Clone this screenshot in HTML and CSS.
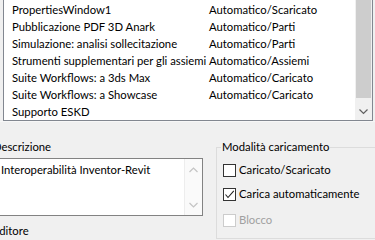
FILE: index.html
```html
<!DOCTYPE html>
<html>
<head>
<meta charset="utf-8">
<link rel="stylesheet" href="styles.css">
</head>
<body>
<div class="list">
  <div class="rows">
    <div class="row"><span class="c1">PropertiesWindow1</span><span class="c2">Automatico/Scaricato</span></div>
    <div class="row"><span class="c1">Pubblicazione PDF 3D Anark</span><span class="c2">Automatico/Parti</span></div>
    <div class="row"><span class="c1">Simulazione: analisi sollecitazione</span><span class="c2">Automatico/Parti</span></div>
    <div class="row"><span class="c1">Strumenti supplementari per gli assiemi</span><span class="c2">Automatico/Assiemi</span></div>
    <div class="row"><span class="c1">Suite Workflows: a 3ds Max</span><span class="c2">Automatico/Caricato</span></div>
    <div class="row"><span class="c1">Suite Workflows: a Showcase</span><span class="c2">Automatico/Caricato</span></div>
    <div class="row"><span class="c1">Supporto ESKD</span><span class="c2"></span></div>
  </div>
  <div class="vscroll">
    <div class="thumb"></div>
    <div class="arrow">
      <svg width="9" height="6" viewBox="0 0 9 6"><polyline points="0.5,0.5 4.5,4.5 8.5,0.5" fill="none" stroke="#606060" stroke-width="1.2"/></svg>
    </div>
  </div>
</div>
<div class="bottom">
  <div class="left">
    <div class="label">Descrizione</div>
    <div class="textbox">
      <div class="tbtext">Interoperabilità Inventor-Revit</div>
      <div class="tbscroll">
        <svg width="9" height="6" viewBox="0 0 9 6"><polyline points="0.5,5 4.5,1 8.5,5" fill="none" stroke="#c4c4c4" stroke-width="1.2"/></svg>
        <svg width="9" height="6" viewBox="0 0 9 6"><polyline points="0.5,1 4.5,5 8.5,1" fill="none" stroke="#c4c4c4" stroke-width="1.2"/></svg>
      </div>
    </div>
    <div class="label editor">Editore</div>
  </div>
  <fieldset class="group">
    <legend>Modalità caricamento</legend>
    <div class="check first"><span class="box"></span><span>Caricato/Scaricato</span></div>
    <div class="check second"><span class="box"><svg width="11" height="11" viewBox="0 0 11 11"><polyline points="1.5,5.5 4,8.5 9.8,1.8" fill="none" stroke="#222" stroke-width="1.1"/></svg></span><span>Carica automaticamente</span></div>
    <div class="check third disabled"><span class="box"></span><span>Blocco</span></div>
  </fieldset>
</div>
</body>
</html>
```
FILE: styles.css
```css
html, body {
  margin: 0;
  padding: 0;
}
body {
  width: 375px;
  height: 240px;
  overflow: hidden;
  background: #f0f0f0;
  font-family: Lato, "Noto Sans", sans-serif;
  font-size: 11.3px;
  color: #000;
}
.list {
  margin-left: 3px;
  width: 370px;
  height: 121px;
  box-sizing: border-box;
  border: 1px solid #828790;
  border-top: none;
  background: #fff;
  display: flex;
}
.rows {
  flex: 1;
  padding-top: 1px;
}
.row {
  display: flex;
  height: 17px;
  line-height: 17px;
  white-space: nowrap;
}
.c1 {
  width: 205px;
  flex: none;
  box-sizing: border-box;
  padding-left: 8px;
  padding-right: 4px;
  overflow: hidden;
}
.c2 {
  flex: 1;
}
.vscroll {
  width: 17px;
  background: #f0f0f0;
  display: flex;
  flex-direction: column;
}
.thumb {
  height: 98px;
  margin: 0 1px;
  background: #cdcdcd;
}
.arrow {
  margin-top: auto;
  height: 17px;
  display: flex;
  align-items: center;
  justify-content: center;
}
.bottom {
  display: flex;
  margin-left: -7px;
  border-top: 1px solid #f7f7f7;
}
.left {
  width: 210px;
  flex: none;
}
.label {
  margin-top: 17px;
  line-height: 16px;
  height: 16px;
}
.textbox {
  margin-top: 3px;
  height: 58px;
  box-sizing: border-box;
  border: 1px solid #828282;
  background: #fff;
  display: flex;
}
.tbtext {
  flex: 1;
  padding-left: 7px;
  padding-top: 3px;
  line-height: 16px;
}
.tbscroll {
  width: 17px;
  border-left: 1px solid #ededed;
  background: #fafafa;
  display: flex;
  flex-direction: column;
  align-items: center;
  justify-content: space-between;
  padding: 8px 0 7px;
}
.label.editor {
  margin-top: 7px;
}
.group {
  margin: 17px 0 0 13px;
  padding: 0 0 10px 6px;
  border: 1px solid #dcdcdc;
  border-right: none;
  flex: 1;
  min-width: 0;
}
.group legend {
  padding: 0 1px;
  margin-left: -2px;
  line-height: 16px;
  white-space: nowrap;
}
.check {
  display: flex;
  align-items: center;
  height: 16px;
  line-height: 16px;
  gap: 3px;
  white-space: nowrap;
}
.check.first { margin-top: 7px; }
.check.second { margin-top: 8px; }
.check.third { margin-top: 10px; }
.box {
  width: 13px;
  height: 13px;
  box-sizing: border-box;
  border: 1px solid #333;
  background: #fff;
  display: flex;
  align-items: center;
  justify-content: center;
  flex: none;
}
.check.disabled {
  color: #a0a0a0;
}
.check.disabled .box {
  border-color: #cccccc;
}
```
